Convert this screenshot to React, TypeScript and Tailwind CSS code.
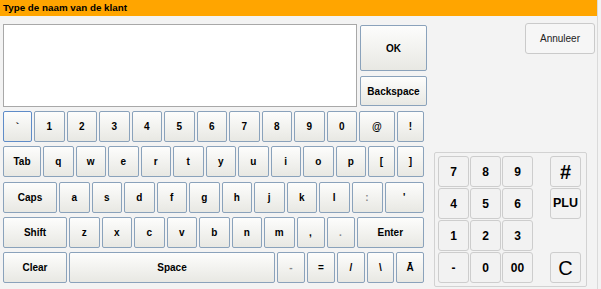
import React from "react";

type Key = { label: string; w: string; focus?: boolean };

const rows: Key[][] = [
  [
    { label: "`", w: "w-[29px]", focus: true },
    { label: "1", w: "w-[30.5px]" },
    { label: "2", w: "w-[30.5px]" },
    { label: "3", w: "w-[30.5px]" },
    { label: "4", w: "w-[30.5px]" },
    { label: "5", w: "w-[30.5px]" },
    { label: "6", w: "w-[30.5px]" },
    { label: "7", w: "w-[30.5px]" },
    { label: "8", w: "w-[30.5px]" },
    { label: "9", w: "w-[30.5px]" },
    { label: "0", w: "w-[30.5px]" },
    { label: "@", w: "w-[36px]" },
    { label: "!", w: "w-[27px]" },
  ],
  [
    { label: "Tab", w: "w-[38px]" },
    { label: "q", w: "w-[30.5px]" },
    { label: "w", w: "w-[30.5px]" },
    { label: "e", w: "w-[30.5px]" },
    { label: "r", w: "w-[30.5px]" },
    { label: "t", w: "w-[30.5px]" },
    { label: "y", w: "w-[30.5px]" },
    { label: "u", w: "w-[30.5px]" },
    { label: "i", w: "w-[30.5px]" },
    { label: "o", w: "w-[30.5px]" },
    { label: "p", w: "w-[30.5px]" },
    { label: "[", w: "w-[27px]" },
    { label: "]", w: "w-[27px]" },
  ],
  [
    { label: "Caps", w: "w-[54px]" },
    { label: "a", w: "w-[30.5px]" },
    { label: "s", w: "w-[30.5px]" },
    { label: "d", w: "w-[30.5px]" },
    { label: "f", w: "w-[30.5px]" },
    { label: "g", w: "w-[30.5px]" },
    { label: "h", w: "w-[30.5px]" },
    { label: "j", w: "w-[30.5px]" },
    { label: "k", w: "w-[30.5px]" },
    { label: "l", w: "w-[30.5px]" },
    { label: ":", w: "w-[31px]" },
    { label: "'", w: "w-[39.5px]" },
  ],
  [
    { label: "Shift", w: "w-[64px]" },
    { label: "z", w: "w-[30.5px]" },
    { label: "x", w: "w-[30.5px]" },
    { label: "c", w: "w-[30.5px]" },
    { label: "v", w: "w-[30.5px]" },
    { label: "b", w: "w-[30.5px]" },
    { label: "n", w: "w-[30.5px]" },
    { label: "m", w: "w-[30.5px]" },
    { label: ",", w: "w-[28px]" },
    { label: ".", w: "w-[28px]" },
    { label: "Enter", w: "w-[67.5px]" },
  ],
  [
    { label: "Clear", w: "w-[64px]" },
    { label: "Space", w: "w-[206px]" },
    { label: "-", w: "w-[28px]" },
    { label: "=", w: "w-[28px]" },
    { label: "/", w: "w-[28px]" },
    { label: "\\", w: "w-[27px]" },
    { label: "Ā", w: "w-[28px]" },
  ],
];

// thin punctuation renders light grey in the original
const faint = [":", ".", "-"];

const keyCls =
  "flex items-center justify-center rounded-[2px] border bg-linear-to-b from-[#fdfdfc] to-[#e8e8e3] text-[10px] font-bold";

function KbKey({ k }: { k: Key }) {
  return (
    <div
      className={`${keyCls} ${k.w} h-full ${k.focus ? "border-[#5f8cc8]" : "border-[#8aa2bb]"} ${
        faint.includes(k.label) ? "text-[#888]" : "text-black"
      }`}
    >
      {k.label}
    </div>
  );
}

const padCls =
  "flex items-center justify-center rounded-[3px] border border-[#cdcdcd] bg-[#f2f2f2] text-black";

export default function App() {
  const digits = ["7", "8", "9", "4", "5", "6", "1", "2", "3", "-", "0", "00"];

  return (
    <div className="flex h-[289px] w-[601px] overflow-hidden bg-[#f3f3f3] font-['Liberation_Sans',Arial,sans-serif]">
      <div className="flex w-[597px] flex-col">
        <div className="h-[16px] bg-[#ffa500] px-[3px] text-[9.8px] font-bold leading-[16px] text-black">
          Type de naam van de klant
        </div>

        <div className="flex flex-1">
          {/* left: input + keyboard */}
          <div className="flex w-[427px] flex-col pl-[3px] pt-[8px]">
            <div className="flex h-[83px] gap-[3px]">
              <div className="h-[83px] w-[354px] border border-[#a8a8a8] bg-white" />
              <div className="flex w-[67px] flex-col gap-[5px] pt-[1px]">
                <div className={`${keyCls} h-[46px] border-[#8aa2bb] text-black`}>OK</div>
                <div className={`${keyCls} h-[30px] border-[#8aa2bb] text-black`}>Backspace</div>
              </div>
            </div>

            <div className="mt-[4px] flex flex-col gap-[4.3px]">
              {rows.map((row, i) => (
                <div key={i} className="flex h-[31px] gap-[2px]">
                  {row.map((k) => (
                    <KbKey key={k.label} k={k} />
                  ))}
                </div>
              ))}
            </div>
          </div>

          {/* right: cancel + numpad */}
          <div className="flex flex-1 flex-col">
            <div className="ml-[98px] mt-[7px] flex h-[31px] w-[70px] items-center justify-center rounded-[3px] border border-[#cacaca] bg-[#f6f6f6] text-[10px] text-[#222]">
              Annuleer
            </div>

            <div className="ml-[7px] mt-[98px] flex h-[135px] w-[153px] rounded-[2px] border border-[#d2d2d2] p-[3px]">
              <div className="grid w-[95px] grid-cols-3 grid-rows-4 gap-[1px]">
                {digits.map((d) => (
                  <div key={d} className={`${padCls} h-[31px] text-[12px] font-bold`}>
                    {d}
                  </div>
                ))}
              </div>
              <div className="ml-[17px] grid w-[31px] grid-rows-4 gap-[1px]">
                <div className={`${padCls} h-[31px] text-[20px] font-bold`}>#</div>
                <div className={`${padCls} h-[31px] text-[12.5px] font-bold`}>PLU</div>
                <div />
                <div className={`${padCls} h-[31px] text-[20px]`}>C</div>
              </div>
            </div>
          </div>
        </div>
      </div>
      <div className="flex-1 border-l border-[#dadada] bg-[#f3f3f3]" />
    </div>
  );
}
